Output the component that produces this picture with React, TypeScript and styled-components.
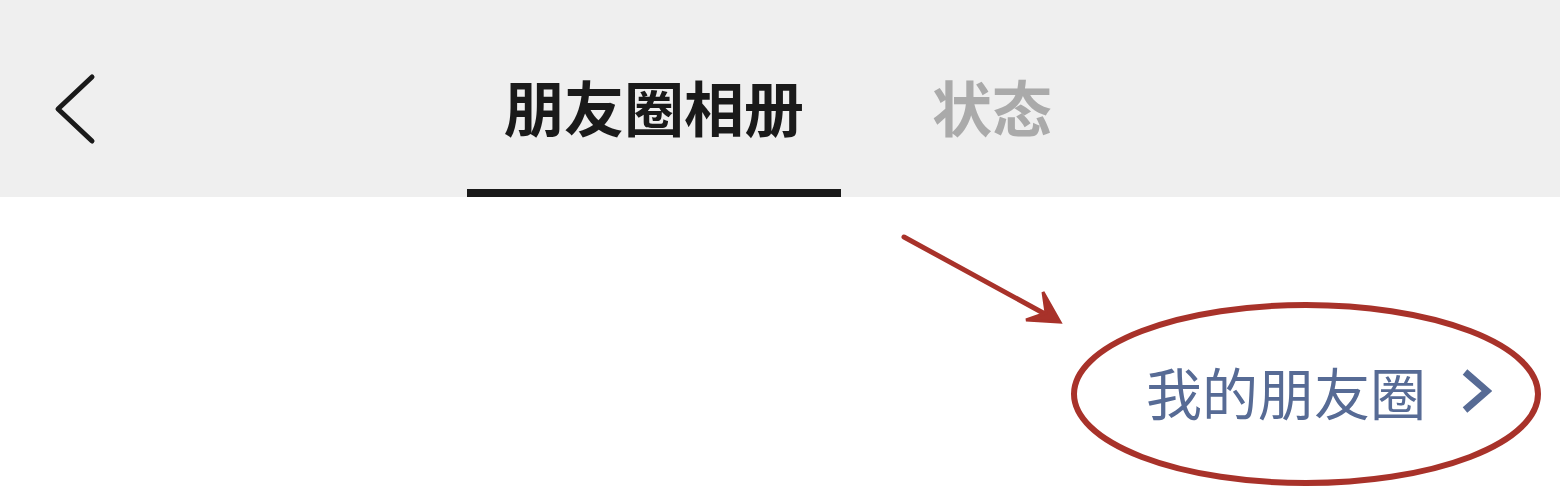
import { createGlobalStyle, styled } from 'styled-components';

const GlobalStyle = createGlobalStyle`
  html, body {
    margin: 0;
    padding: 0;
    background: #ffffff;
  }
  body {
    font-family: "Noto Sans CJK SC", "Noto Sans", sans-serif;
  }
`;

const Page = styled.div`
  position: relative;
  width: 1560px;
  height: 502px;
  overflow: hidden;
  background: #ffffff;
`;

const NavBar = styled.header`
  display: flex;
  align-items: stretch;
  height: 197px;
  padding-left: 52px;
  background: #efefef;
  box-sizing: border-box;
`;

const BackButton = styled.button`
  display: flex;
  align-items: center;
  justify-content: center;
  width: 46px;
  padding: 0;
  margin-top: 20px;
  border: none;
  background: transparent;
`;

const Tabs = styled.nav`
  display: flex;
  gap: 54px;
  margin-left: 369px;
`;

const Tab = styled.div<{ $active?: boolean }>`
  position: relative;
  display: flex;
  align-items: center;
  padding: 14px 37px 0;
  font-size: 60px;
  line-height: 1;
  font-weight: 700;
  color: ${(p) => (p.$active ? '#1a1a1a' : '#aaaaaa')};

  &::after {
    content: '';
    position: absolute;
    left: 0;
    right: 0;
    bottom: 0;
    height: 8px;
    background: ${(p) => (p.$active ? '#1a1a1a' : 'transparent')};
  }
`;

const Content = styled.main`
  display: flex;
  justify-content: flex-end;
  padding: 166px 68px 0 0;
`;

const MomentsLink = styled.a`
  display: flex;
  align-items: center;
  gap: 34px;
  font-size: 56px;
  line-height: 1;
  color: #576b95;
  text-decoration: none;
`;

const Annotation = styled.svg`
  position: absolute;
  inset: 0;
  pointer-events: none;
`;

export default function App() {
  return (
    <Page>
      <GlobalStyle />
      <NavBar>
        <BackButton aria-label="返回">
          <svg width="42" height="72" viewBox="0 0 42 72">
            <polyline
              points="38,4 4,36 38,68"
              fill="none"
              stroke="#1a1a1a"
              strokeWidth="5"
              strokeLinecap="round"
              strokeLinejoin="round"
            />
          </svg>
        </BackButton>
        <Tabs>
          <Tab $active>朋友圈相册</Tab>
          <Tab>状态</Tab>
        </Tabs>
      </NavBar>
      <Content>
        <MomentsLink href="#">
          我的朋友圈
          <svg width="32" height="46" viewBox="0 0 32 46">
            <polyline
              points="5,4 27,23 5,42"
              fill="none"
              stroke="#576b95"
              strokeWidth="7"
              strokeLinejoin="miter"
            />
          </svg>
        </MomentsLink>
      </Content>
      <Annotation width="1560" height="502" viewBox="0 0 1560 502">
        <line x1="904" y1="237" x2="1056" y2="320" stroke="#a8322a" strokeWidth="5" strokeLinecap="round" />
        <polygon points="1043,292 1060,322 1026,320 1046,313" fill="#a8322a" stroke="#a8322a" strokeWidth="3" strokeLinejoin="miter" />
        <ellipse cx="1306" cy="394" rx="232" ry="89" fill="none" stroke="#a8322a" strokeWidth="6" />
      </Annotation>
    </Page>
  );
}
